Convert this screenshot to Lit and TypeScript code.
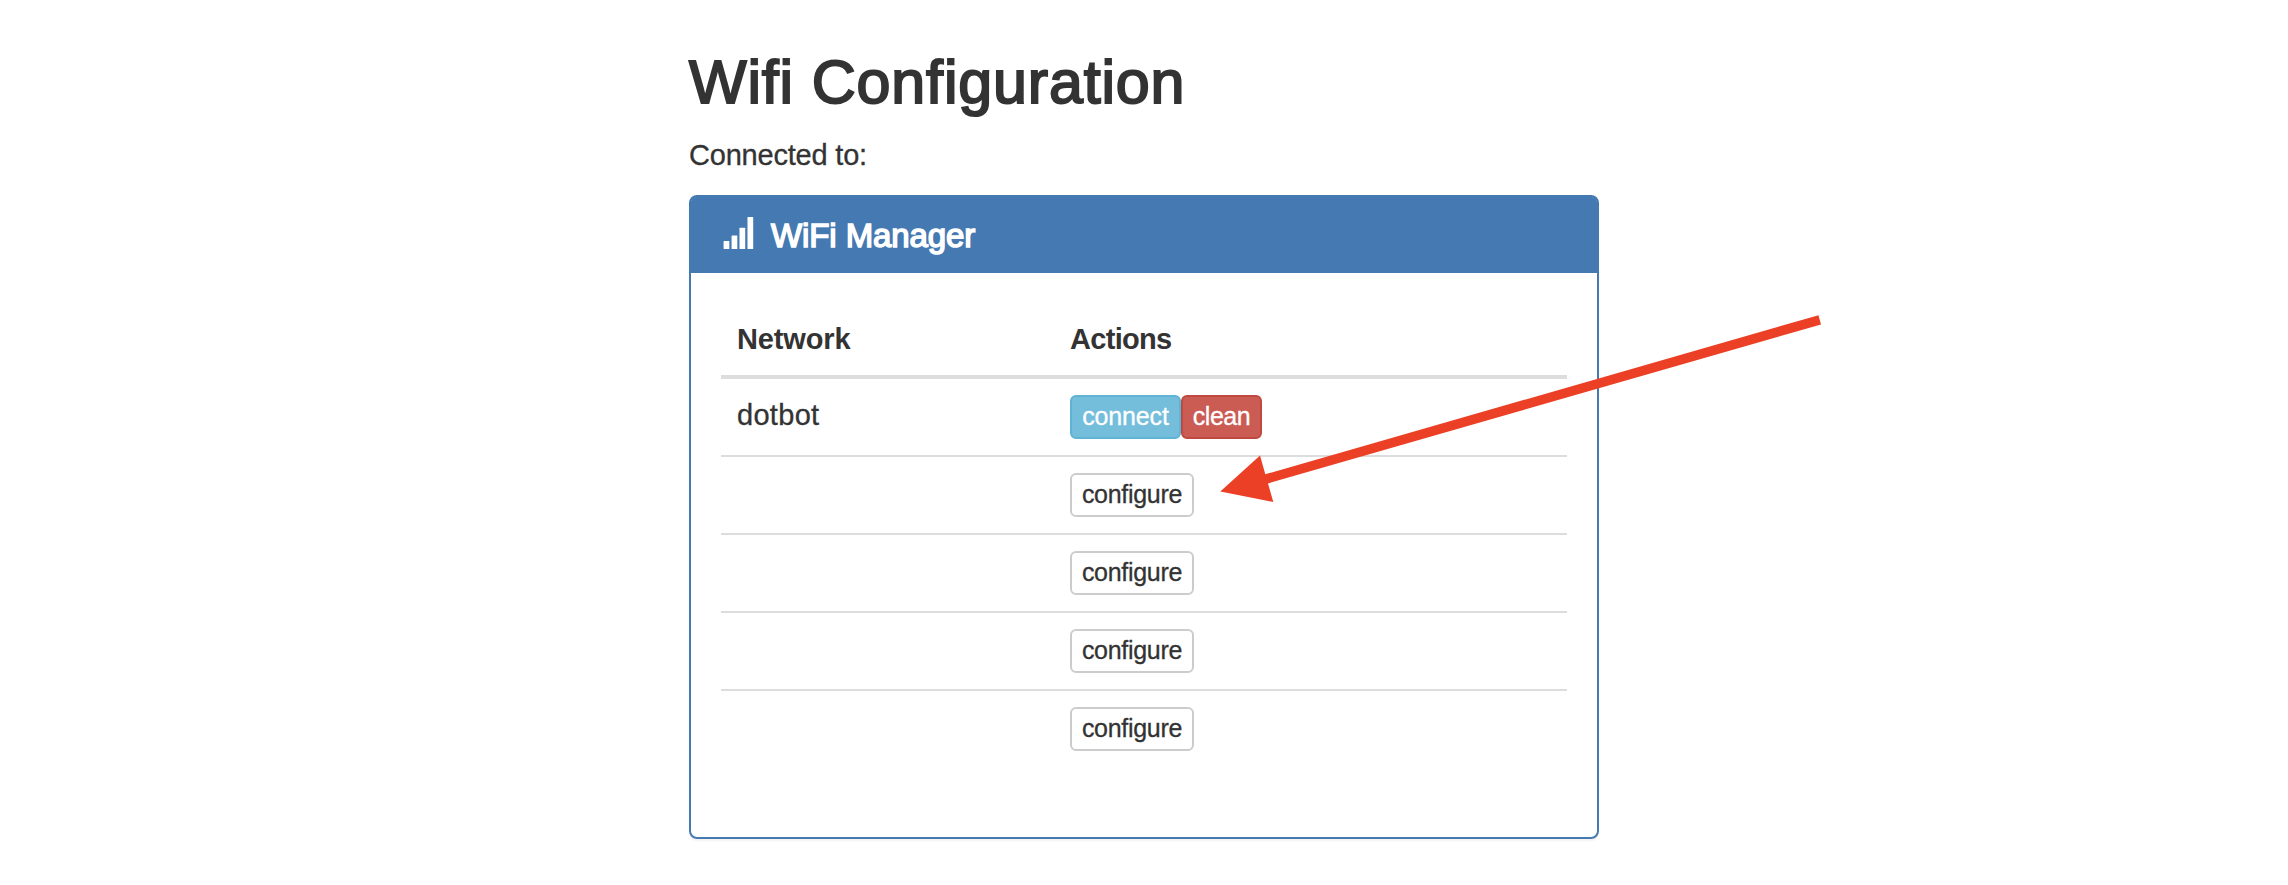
import { LitElement, html, css } from "lit";
import { customElement } from "lit/decorators.js";

interface Action { label: string; kind: "info" | "danger" | "default"; }
interface Row { network: string; actions: Action[]; }

const configure: Action = { label: "configure", kind: "default" };

const ROWS: Row[] = [
  { network: "dotbot", actions: [{ label: "connect", kind: "info" }, { label: "clean", kind: "danger" }] },
  { network: "", actions: [configure] },
  { network: "", actions: [configure] },
  { network: "", actions: [configure] },
  { network: "", actions: [configure] },
];

@customElement("app-root")
export class AppRoot extends LitElement {
  static styles = css`
    * { box-sizing: border-box; }
    :host {
      display: block;
      position: relative;
      height: 885px;
      overflow: hidden;
      background: #fff;
      color: #333;
      font: 29px/40px "Liberation Sans", Arial, sans-serif;
      -webkit-text-stroke: 0.3px currentColor;
    }
    .page { width: 910px; margin: 0 auto; padding-top: 49px; }
    .title {
      margin: 0 0 20px;
      font-size: 61px;
      line-height: 66px;
      font-weight: 400;
      letter-spacing: 0.83px;
      -webkit-text-stroke: 2px #333;
    }
    .status { margin: 0 0 20px; letter-spacing: -0.2px; }
    .panel {
      height: 644px;
      border: 2px solid #4579b2;
      border-radius: 8px;
      box-shadow: 0 2px 2px rgba(0, 0, 0, 0.05);
    }
    .heading {
      display: flex;
      height: 76px;
      padding: 20px 30px;
      background: #4579b2;
      border-radius: 5px 5px 0 0;
      color: #fff;
    }
    .signal { flex: none; width: 32px; height: 34px; margin: 0 17px 0 1px; }
    .heading-text {
      margin: 0;
      padding-top: 1px;
      font-size: 33px;
      line-height: 35px;
      font-weight: 400;
      letter-spacing: -0.1px;
      -webkit-text-stroke: 1.5px #fff;
    }
    .body { padding: 30px; }
    .table { width: 100%; border-collapse: separate; border-spacing: 0; table-layout: fixed; }
    th { height: 76px; padding: 16px; text-align: left; border-bottom: 4px solid #ddd; letter-spacing: -0.7px; -webkit-text-stroke: 0; }
    .network { width: 333px; letter-spacing: -0.15px; }
    td { height: 78px; padding: 16px; border-top: 2px solid #ddd; vertical-align: top; letter-spacing: 0.3px; }
    tbody tr:first-child td { height: 76px; border-top: 0; }
    .actions { display: flex; }
    .btn {
      height: 44px;
      padding: 1px 8px 3px;
      border: 2px solid;
      border-radius: 6px;
      font: 25px/36px "Liberation Sans", Arial, sans-serif;
      -webkit-text-stroke: 0.3px currentColor;
      white-space: nowrap;
      text-align: center;
    }
    .default { width: 124px; color: #333; background: #fff; border-color: #ccc; letter-spacing: -0.3px; }
    .info { width: 111px; color: #fff; background: #74bddb; border-color: #5fb3d5; letter-spacing: -0.15px; }
    .danger { width: 81px; color: #fff; background: #ca5c54; border-color: #bf4840; letter-spacing: -0.5px; }
    .arrow { position: absolute; left: 1220px; top: 314px; width: 604px; height: 190px; pointer-events: none; }
  `;

  render() {
    return html`
      <main class="page">
        <h1 class="title">Wifi Configuration</h1>
        <p class="status">Connected to:</p>
        <section class="panel">
          <header class="heading">
            <svg class="signal" viewBox="0 0 32 34" fill="#fff" aria-hidden="true">
              <rect x="1.6" y="24" width="5.7" height="8" rx=".5" />
              <rect x="9.6" y="18.5" width="5.7" height="13.5" rx=".5" />
              <rect x="17.5" y="10.7" width="5.7" height="21.3" rx=".5" />
              <rect x="25.5" y="0" width="5.7" height="32" rx=".5" />
            </svg>
            <h2 class="heading-text">WiFi Manager</h2>
          </header>
          <div class="body">
            <table class="table">
              <thead>
                <tr><th class="network">Network</th><th>Actions</th></tr>
              </thead>
              <tbody>
                ${ROWS.map((row) => html`
                  <tr>
                    <td>${row.network}</td>
                    <td><div class="actions">${row.actions.map((a) => html`<button class="btn ${a.kind}">${a.label}</button>`)}</div></td>
                  </tr>`)}
              </tbody>
            </table>
          </div>
        </section>
      </main>
      <svg class="arrow" viewBox="1220 314 604 190" aria-hidden="true">
        <path fill="#eb4025" d="M1220.3 491.6 L1260 455.5 L1265.3 474.3 L1818.5 315.2 L1821 324.5 L1268 483.4 L1273.3 502 Z" />
      </svg>
    `;
  }
}
